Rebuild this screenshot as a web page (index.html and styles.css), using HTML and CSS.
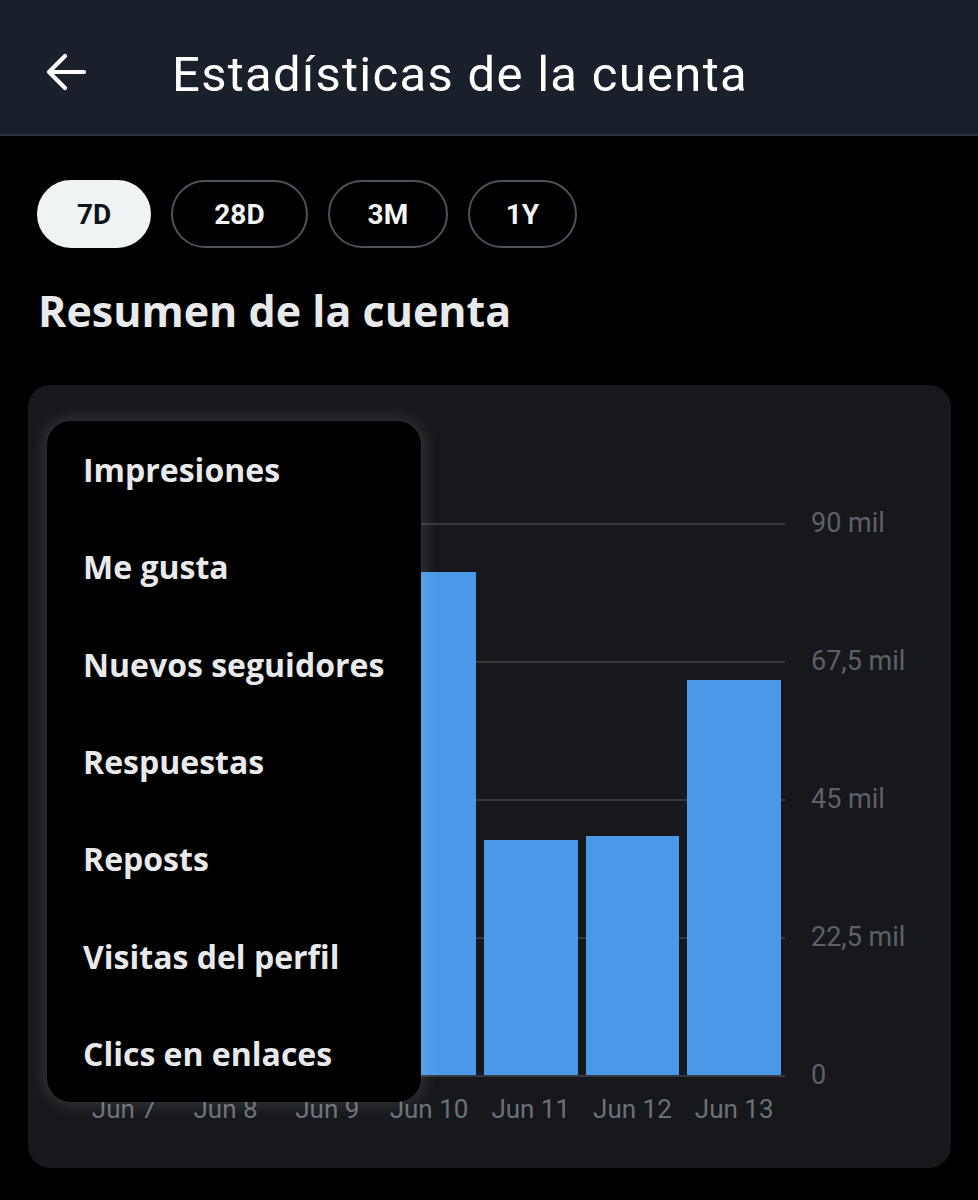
FILE: index.html
```html
<!DOCTYPE html>
<html lang="es">
<head>
    <meta charset="UTF-8">
    <meta name="viewport" content="width=device-width, initial-scale=1.0">
    <title>Estadísticas de la cuenta</title>
    <link rel="stylesheet" href="styles.css">
</head>
<body>
    <header class="topbar">
        <button class="back" aria-label="Atrás">
            <svg width="44" height="44" viewBox="0 0 44 44">
                <path d="M40 22H6M21 6L5 22l16 16" fill="none" stroke="#fff" stroke-width="4.2" stroke-linecap="round" stroke-linejoin="round"/>
            </svg>
        </button>
        <h1>Estadísticas de la cuenta</h1>
    </header>

    <main class="content">
        <div class="ranges">
            <button class="pill active">7D</button>
            <button class="pill wide">28D</button>
            <button class="pill">3M</button>
            <button class="pill short">1Y</button>
        </div>

        <h2 class="section-title">Resumen de la cuenta</h2>

        <section class="card">
            <div class="chart">
                <div class="plot-col">
                    <div class="plot">
                        <div class="bar" style="height: 290px"></div>
                        <div class="bar" style="height: 340px"></div>
                        <div class="bar" style="height: 215px"></div>
                        <div class="bar" style="height: 503px"></div>
                        <div class="bar" style="height: 235px"></div>
                        <div class="bar" style="height: 239px"></div>
                        <div class="bar" style="height: 395px"></div>
                    </div>
                    <div class="dates">
                        <span>Jun 7</span>
                        <span>Jun 8</span>
                        <span>Jun 9</span>
                        <span>Jun 10</span>
                        <span>Jun 11</span>
                        <span>Jun 12</span>
                        <span>Jun 13</span>
                    </div>
                </div>
                <div class="y-axis">
                    <span>90 mil</span>
                    <span>67,5 mil</span>
                    <span>45 mil</span>
                    <span>22,5 mil</span>
                    <span>0</span>
                </div>
            </div>

            <ul class="metric-menu">
                <li>Impresiones</li>
                <li>Me gusta</li>
                <li>Nuevos seguidores</li>
                <li>Respuestas</li>
                <li>Reposts</li>
                <li>Visitas del perfil</li>
                <li>Clics en enlaces</li>
            </ul>
        </section>
    </main>
</body>
</html>
```

FILE: styles.css
```css
body {
    margin: 0;
    padding: 0;
    background-color: #000;
    color: #e7e9ea;
    font-family: Roboto, "Liberation Sans", sans-serif;
}
.topbar {
    height: 136px;
    display: flex;
    align-items: center;
    padding: 14px 0 0 44px;
    background-color: #19202a;
    border-bottom: 2px solid #2a333c;
    box-sizing: border-box;
}
.back {
    background: none;
    border: none;
    padding: 0;
    width: 44px;
    height: 44px;
    margin-top: -4px;
    cursor: pointer;
}
.topbar h1 {
    margin: 0 0 0 84px;
    font-size: 49px;
    font-weight: 400;
    color: #fff;
    letter-spacing: 1.3px;
}
.content {
    padding: 44px 27px 0 28px;
}
.ranges {
    display: flex;
    gap: 20px;
    padding-left: 9px;
}
.pill {
    height: 68px;
    padding: 0 38px;
    border: 2px solid #4b535b;
    border-radius: 34px;
    background: #000;
    color: #f2f4f5;
    font-family: Roboto, "Liberation Sans", sans-serif;
    font-size: 28px;
    font-weight: 700;
}
.pill.wide {
    padding: 0 41px;
}
.pill.short {
    padding: 0 35.5px;
}
.pill.active {
    background: #eff3f4;
    border-color: #eff3f4;
    color: #0f1419;
}
.section-title {
    margin: 35px 0 0 10px;
    font-family: "Open Sans", sans-serif;
    font-size: 43px;
    font-weight: 700;
    line-height: 56px;
    color: #e7e9ea;
}
.card {
    position: relative;
    margin-top: 46px;
    height: 783px;
    background-color: #17181c;
    border-radius: 22px;
}
.chart {
    display: flex;
    padding: 138px 0 0 45px;
}
.plot-col {
    width: 712px;
}
.plot {
    height: 554px;
    display: flex;
    align-items: flex-end;
    gap: 8px;
    padding: 0 4px;
    box-sizing: border-box;
    background-image: repeating-linear-gradient(to bottom, #35383d 0, #35383d 2px, transparent 2px, transparent 138px);
}
.bar {
    flex: 1;
    background-color: #4a99e8;
    margin-bottom: 2px;
}
.dates {
    display: flex;
    padding: 0 4px;
    gap: 8px;
    margin-top: 17px;
}
.dates span {
    flex: 1;
    text-align: center;
    font-size: 26px;
    color: #6c7176;
}
.y-axis {
    height: 552px;
    display: flex;
    flex-direction: column;
    justify-content: space-between;
    margin-left: 26px;
}
.y-axis span {
    height: 0;
    display: flex;
    align-items: center;
    font-size: 27px;
    color: #5d6166;
    white-space: nowrap;
}
.metric-menu {
    position: absolute;
    left: 19px;
    top: 36px;
    width: 374px;
    margin: 0;
    padding: 0;
    list-style: none;
    background: #000;
    border-radius: 24px;
    box-shadow: 0 0 16px 3px rgba(255, 255, 255, 0.13);
}
.metric-menu li {
    height: 97.3px;
    display: flex;
    align-items: center;
    padding-left: 36px;
    font-family: "Open Sans", sans-serif;
    font-size: 32px;
    font-weight: 700;
    color: #e7e9ea;
}
```
